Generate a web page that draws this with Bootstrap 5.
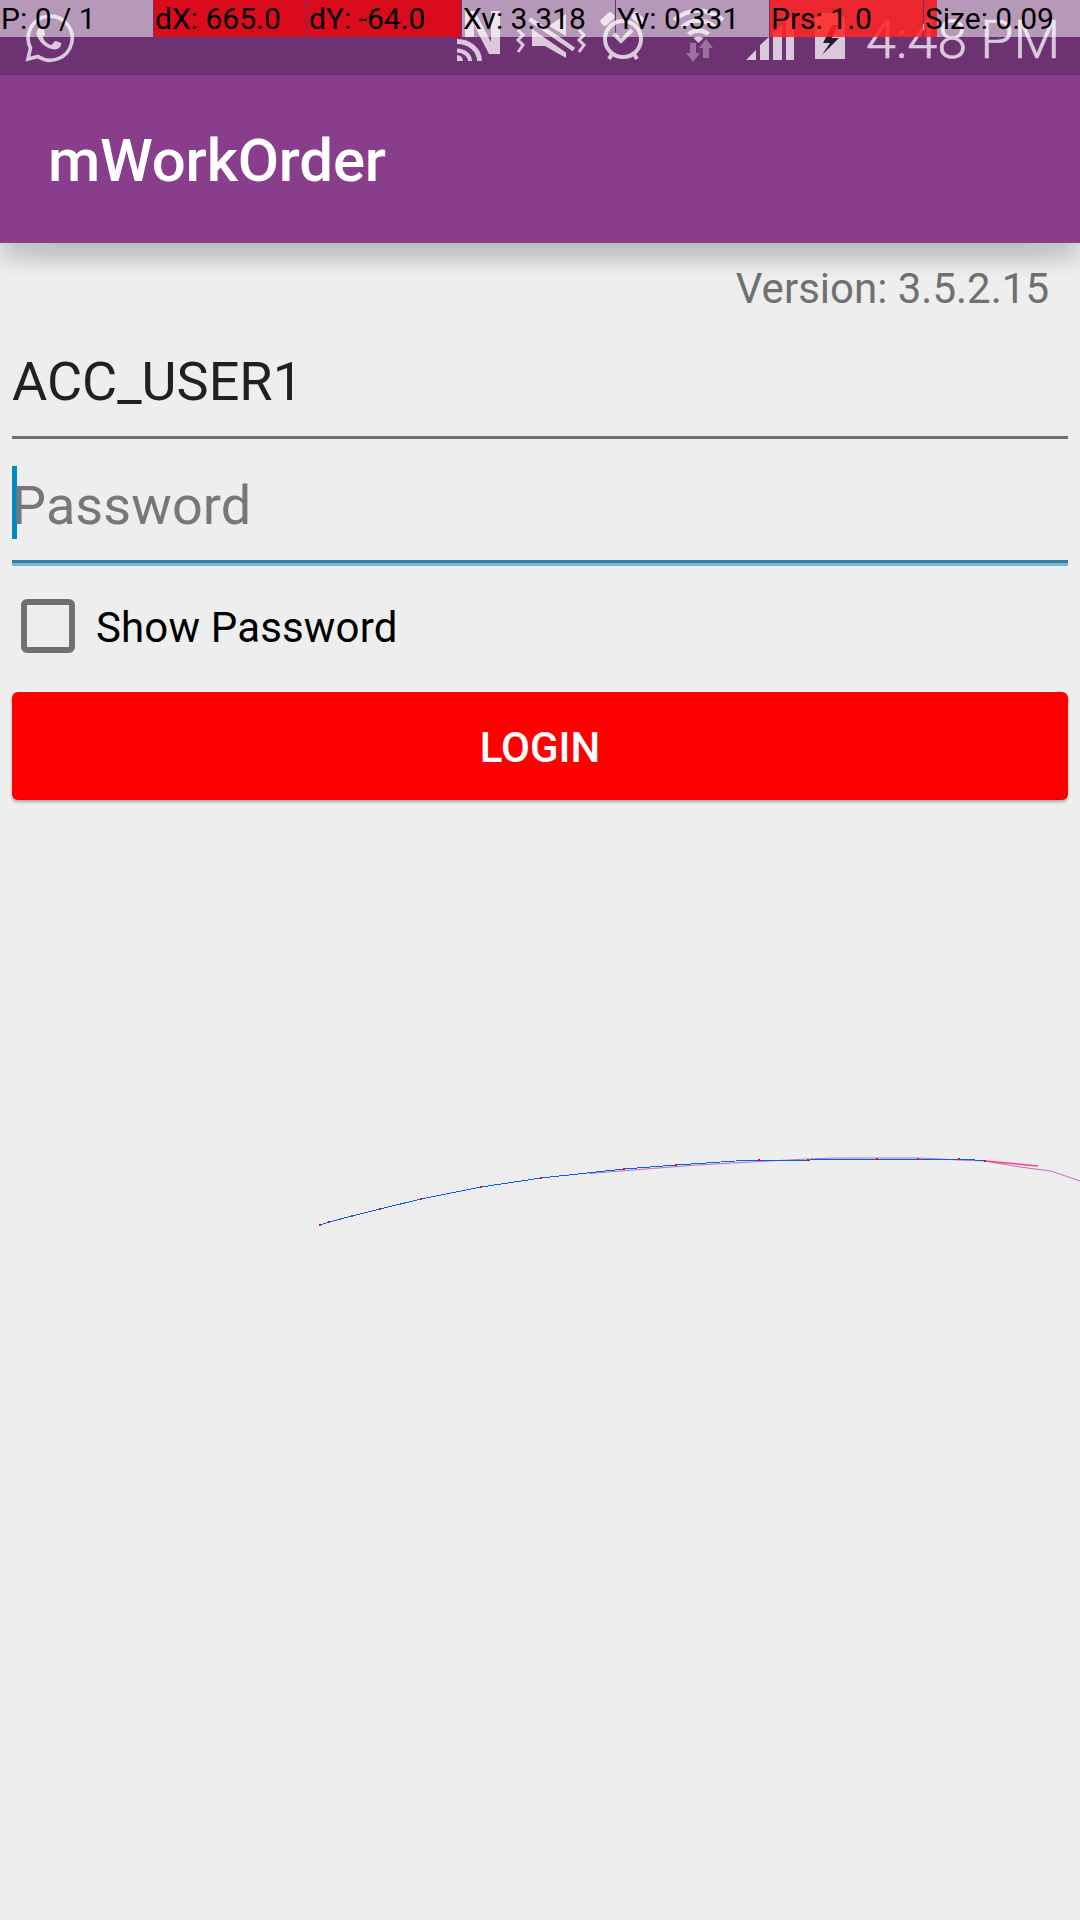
<!DOCTYPE html>
<html lang="en">
<head>
<meta charset="utf-8">
<meta name="viewport" content="width=device-width, initial-scale=1">
<title>mWorkOrder</title>
<link rel="stylesheet" href="https://cdn.jsdelivr.net/npm/bootstrap@5.3.0/dist/css/bootstrap.min.css">
<style>
body{font-family:Roboto,"Liberation Sans",sans-serif;background:#eee;color:#000;line-height:1.172}
.screen{width:1080px;height:1920px}
.statusbar{height:75px;background:#6d3272;color:#dac9db;padding-left:25px;padding-right:21px}
.statusbar svg{height:75px;flex:none}
.clock{font-size:54px;font-weight:300;line-height:79px;width:193px;white-space:nowrap;-webkit-text-stroke:.6px #dac9db}
.pointer-bar{height:37px;font-size:30px;line-height:37px;gap:1px;z-index:5}
.pointer-bar>div{width:153px;flex:none;padding-left:1px;white-space:nowrap;background:rgba(255,255,255,.5)}
.pointer-bar>div:last-child{flex:1 0 auto;width:156px}
.pointer-bar>.hot{background:rgba(255,0,0,.75)}
.pointer-bar>.pressed{background:linear-gradient(rgba(255,0,0,.75),rgba(255,0,0,.75)),rgba(255,255,255,.5)}
.pointer-bar>.sized{background:linear-gradient(rgba(255,0,0,.75),rgba(255,0,0,.75)) 0 0/13px 100% no-repeat,rgba(255,255,255,.5)}
.appbar{height:168px;background:#883e8b;padding:4px 48px 0}
.appbar::after{content:"";position:absolute;left:0;right:0;top:100%;height:34px;background:linear-gradient(rgba(0,0,0,.2),rgba(0,0,0,.165) 30%,rgba(0,0,0,.09) 55%,rgba(0,0,0,.03) 78%,transparent);-webkit-mask-image:linear-gradient(90deg,rgba(0,0,0,.4),rgba(0,0,0,.8) 16px,#000 60px,#000 1020px,rgba(0,0,0,.8) 1064px,rgba(0,0,0,.4))}
.appbar h1{font-size:60px;font-weight:500;line-height:1.172;letter-spacing:-.2px}
.version{font-size:42px;line-height:50px;color:#707070;padding:21px 31px 0 0}
.login-form{padding:0 12px}
.login-form .line-input{font-size:54px;line-height:64px;border:0;border-radius:0;background:transparent;padding:0;box-shadow:none;color:#212121}
.user-row{height:125px;padding-top:36px;border-bottom:3px solid #707070}
.pass-row{height:127px;padding-top:35px;border-bottom:3px solid #78b7d6;box-shadow:inset 0 -3px #397c9c}
.login-form .line-input::placeholder{color:#777;opacity:1;letter-spacing:.1px}
.caret{left:0;top:27px;width:5px;height:73px;background:#008ac4}
.show-row{height:126px;padding:0 9px 6px;font-size:42px;gap:21px}
.show-row label{padding-top:4px;letter-spacing:.15px}
.show-row .form-check-input{width:54px;height:54px;margin:0;border:6px solid #707070;border-radius:6px;background:transparent}
.login-btn{height:108px;border:0;border-radius:6px;background:#f00;font-size:42px;font-weight:500;padding:3px 0 0;box-shadow:0 2px 3px rgba(0,0,0,.3)}
.trace{left:0;top:1140px;pointer-events:none}
</style>
</head>
<body>
<main class="screen position-relative overflow-hidden">
  <div class="pointer-bar d-flex position-absolute top-0 start-0 w-100">
    <div>P: 0 / 1</div><div class="hot">dX: 665.0</div><div class="hot">dY: -64.0</div><div>Xv: 3.318</div><div>Yv: 0.331</div><div class="pressed">Prs: 1.0</div><div class="sized">Size: 0.09</div>
  </div>
  <header>
    <div class="statusbar d-flex">
      <!-- chat -->
      <svg width="50" viewBox="26 0 50 75" fill="currentColor"><path d="M29 59 31.500 48A22 22 0 1 1 39 56.500Z" fill="none" stroke="currentColor" stroke-width="3.600"/><path d="M39 29c3-2 5-2 6 1l1 4c0 2-3 3-2 4 2 4 5 6 8 7 2 0 2-4 5-4l5 2c1 3-2 6-6 6.500-9 0-18-9-18.500-17Z"/></svg>
      <!-- nfc, muted, alarm, wifi, signal, battery -->
      <svg class="ms-auto" width="405" viewBox="457 0 405 75" fill="currentColor">
        <path d="M465 11h10l16 31V11h9v43h-11l-15-29v12h-9Z"/>
        <g fill="none" stroke="currentColor"><path d="M457 41.500A22.500 19.500 0 0 1 479.500 61" stroke-width="5"/><path d="M457 50.500A13 10.500 0 0 1 470 61" stroke-width="4"/></g><path d="M457 55a6 6 0 0 1 6 6h-6Z"/>
        <g fill="none" stroke="currentColor" stroke-width="3"><path d="m518 30 5 5-5 5 5 5-5 7M579 30l5 5-5 5 5 5-5 7"/></g>
        <path d="M532 29 566 52.500V58L545 46h-13ZM549 26l17-12v22Z"/><path d="m529.500 19 44.500 30.500" stroke="currentColor" stroke-width="4.500"/>
        <circle cx="623" cy="39" r="18" fill="none" stroke="currentColor" stroke-width="4"/><path d="m614 34 7 7 11-11M612 54l-3 5M634 54l3 5" fill="none" stroke="currentColor" stroke-width="4"/><rect x="600" y="15" width="15" height="8" rx="3" transform="rotate(-42 607.500 19)"/><rect x="631" y="15" width="15" height="8" rx="3" transform="rotate(42 638.500 19)"/>
        <g fill="none" stroke="currentColor" stroke-width="4.500"><path d="M674 20q24-19 49 0M682 27q16-13 33 0M688.500 34q10-7 20 0"/></g><path d="m693.500 38q5-3 10 0l-5 5Z"/>
        <path d="M690 43h6v10h4l-7 9-7-9h4ZM703 58V48h-4l7-9 7 9h-4v10Z" fill="#9c709f"/>
        <path d="m746 60 10-10v10ZM760 60V45l9-8v23ZM773 60V33l9-8v35ZM786 60V21l8-7v46ZM815 17h7v-4h16v4h7v42h-30Z"/><path d="m832 25-9 18h7l-8 12 17-17h-7l6-13Z" fill="#2c1930"/>
      </svg>
      <div class="clock ms-1">4:48 PM</div>
    </div>
    <div class="appbar navbar position-relative"><h1 class="m-0 text-white">mWorkOrder</h1></div>
  </header>
  <div class="version text-end">Version: 3.5.2.15</div>
  <form class="login-form">
    <div class="user-row"><input class="form-control line-input" value="ACC_USER1" aria-label="User"></div>
    <div class="pass-row position-relative"><span class="caret position-absolute"></span><input class="form-control line-input position-relative" type="password" placeholder="Password" aria-label="Password"></div>
    <div class="show-row d-flex align-items-center"><input id="show" class="form-check-input flex-shrink-0" type="checkbox"><label for="show">Show Password</label></div>
    <button type="button" class="btn login-btn w-100 text-white">LOGIN</button>
  </form>
  <svg class="trace position-absolute" width="1080" height="100" viewBox="0 1140 1080 100" fill="none">
    <path d="M589 1173.500 690 1165.500 750 1162 808 1159 835 1158H918L959 1160 985 1161 1020 1167 1051 1171 1080 1181" stroke="#b972b5"/>
    <path d="M985 1161 1038 1166" stroke="#ff4080" stroke-width="1.500"/>
    <path d="M320 1225 329 1222 352 1216 380 1209 421 1199 481 1187 541 1178 624 1169 676 1165 743 1160.500H808L812 1159.500H970L985 1161" stroke="#0060ff" shape-rendering="crispEdges"/>
    <path d="M319 1225h2M328 1222h2M351 1216h2M379 1209h2M420 1199h2M480 1187h2M540 1178h2M623 1169h2M675 1165h2M758 1160h2M807 1160h2M876 1159h2M917 1159h2M958 1159h2M984 1161h2" stroke="red" stroke-width="2"/>
  </svg>
</main>
<script src="https://cdn.jsdelivr.net/npm/bootstrap@5.3.0/dist/js/bootstrap.bundle.min.js"></script>
</body>
</html>
